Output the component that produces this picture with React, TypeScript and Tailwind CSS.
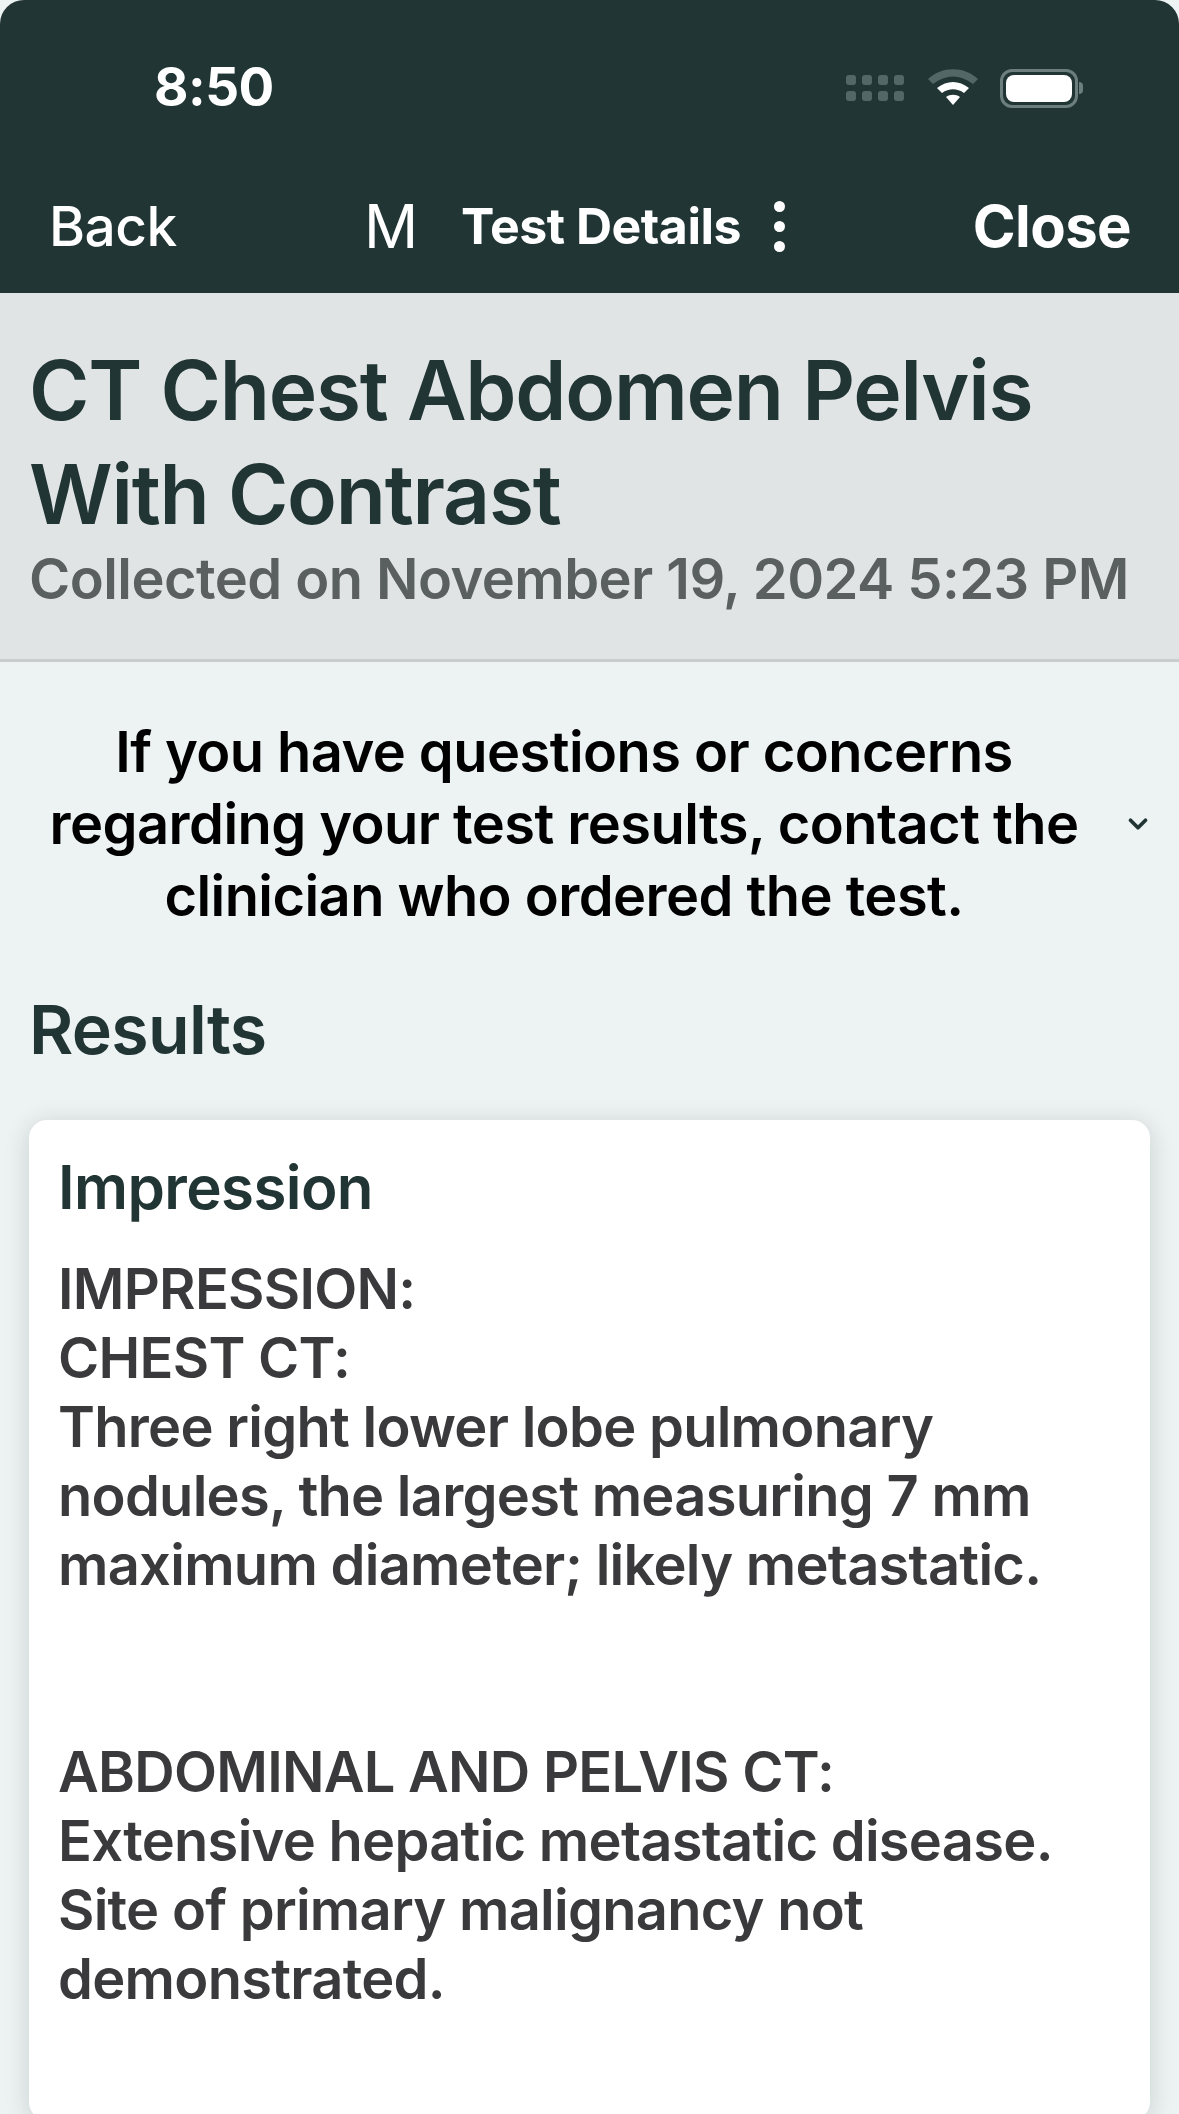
import { ChevronDown } from 'lucide-react'

function StatusIcons() {
    return (
        <div className="flex items-center">
            <svg width="60" height="27" viewBox="0 0 60 27" className="mr-[22px]">
                <g fill="#536866">
                    <rect x="0" y="0" width="10" height="10" rx="3" />
                    <rect x="16" y="0" width="10" height="10" rx="3" />
                    <rect x="32" y="0" width="10" height="10" rx="3" />
                    <rect x="48" y="0" width="10" height="10" rx="3" />
                    <rect x="0" y="16" width="10" height="10" rx="3" />
                    <rect x="16" y="16" width="10" height="10" rx="3" />
                    <rect x="32" y="16" width="10" height="10" rx="3" />
                    <rect x="48" y="16" width="10" height="10" rx="3" />
                </g>
            </svg>
            <svg width="50" height="38" viewBox="0 0 50 38" className="mr-[22px]">
                <path d="M0 10 C14 -3 36 -3 50 10 L45 15 C32 5 18 5 5 15 Z" fill="#536866" />
                <path d="M9 19 C19 11 31 11 41 19 L36 24 C29 19 21 19 14 24 Z" fill="#fff" />
                <path d="M18 28 C22 25 28 25 32 28 L25 36 Z" fill="#fff" />
            </svg>
            <div className="flex items-center">
                <div className="w-[78px] h-[39px] rounded-[12px] border-[3px] border-[#6c7f7e] p-[3px]">
                    <div className="w-full h-full rounded-[8px] bg-white" />
                </div>
                <div className="w-[4px] h-[12px] ml-[1px] rounded-r-full bg-[#6c7f7e]" />
            </div>
        </div>
    )
}

export default function App() {
    return (
        <div className="w-[1179px] h-[2114px] overflow-hidden bg-[#edf2f2] font-['Inter','Liberation_Sans',sans-serif]">
            <div className="h-[293px] bg-[#223535] rounded-t-[24px] text-white">
                <div className="flex items-center justify-between h-[176px] pl-[154px] pr-[96px]">
                    <span className="text-[53px] font-bold tracking-[-0.01em]">8:50</span>
                    <StatusIcons />
                </div>
                <div className="flex items-center h-[100px] pl-[49px] pr-[48px]">
                    <span className="text-[55px] font-medium w-[315px] tracking-[-0.01em]">Back</span>
                    <span className="text-[60px] w-[97px]">M</span>
                    <span className="text-[50px] font-bold w-[298px] whitespace-nowrap tracking-[-0.01em]">Test Details</span>
                    <div className="flex flex-col gap-[9px] ml-[15px]">
                        <div className="w-[11px] h-[11px] rounded-full bg-white" />
                        <div className="w-[11px] h-[11px] rounded-full bg-white" />
                        <div className="w-[11px] h-[11px] rounded-full bg-white" />
                    </div>
                    <span className="text-[58px] font-bold ml-auto tracking-[-0.01em]">Close</span>
                </div>
            </div>

            <div className="h-[369px] bg-[#e0e4e5] border-b-[3px] border-[#c9cdce] px-[29px] pt-[46px]">
                <h1 className="text-[82px] leading-[104px] font-semibold text-[#223535] tracking-[-0.015em]">CT Chest Abdomen Pelvis With Contrast</h1>
                <p className="text-[56px] leading-[65px] font-semibold text-[#5a5f60] whitespace-nowrap tracking-[-0.01em]">Collected on November 19, 2024 5:23 PM</p>
            </div>

            <div className="flex items-center pt-[54px] pl-[29px] pr-[26px]">
                <p className="w-[1070px] text-center text-[56px] leading-[72px] font-semibold text-black tracking-[-0.01em]">
                    If you have questions or concerns<br />regarding your test results, contact the<br />clinician who ordered the test.
                </p>
                <ChevronDown size={30} strokeWidth={3} className="text-[#223535] ml-auto" />
            </div>

            <h2 className="px-[29px] mt-[57px] text-[68px] leading-[80px] font-semibold text-[#223535] tracking-[-0.01em]">Results</h2>

            <div className="mx-[29px] mt-[51px] h-[1000px] rounded-[18px] bg-white shadow-[0_4px_24px_rgba(34,53,53,0.18)] px-[29px] pt-[30px]">
                <h3 className="text-[60px] leading-[74px] font-semibold text-[#223535] tracking-[-0.01em]">Impression</h3>
                <div className="mt-[31px] text-[56px] leading-[69px] font-semibold text-[#3a3a3c] tracking-[-0.013em]">
                    <p>IMPRESSION:</p>
                    <p>CHEST CT:</p>
                    <p>Three right lower lobe pulmonary nodules, the largest measuring 7 mm maximum diameter; likely metastatic.</p>
                    <p className="mt-[138px]">ABDOMINAL AND PELVIS CT:</p>
                    <p>Extensive hepatic metastatic disease. Site of primary malignancy not demonstrated.</p>
                </div>
            </div>
        </div>
    )
}
